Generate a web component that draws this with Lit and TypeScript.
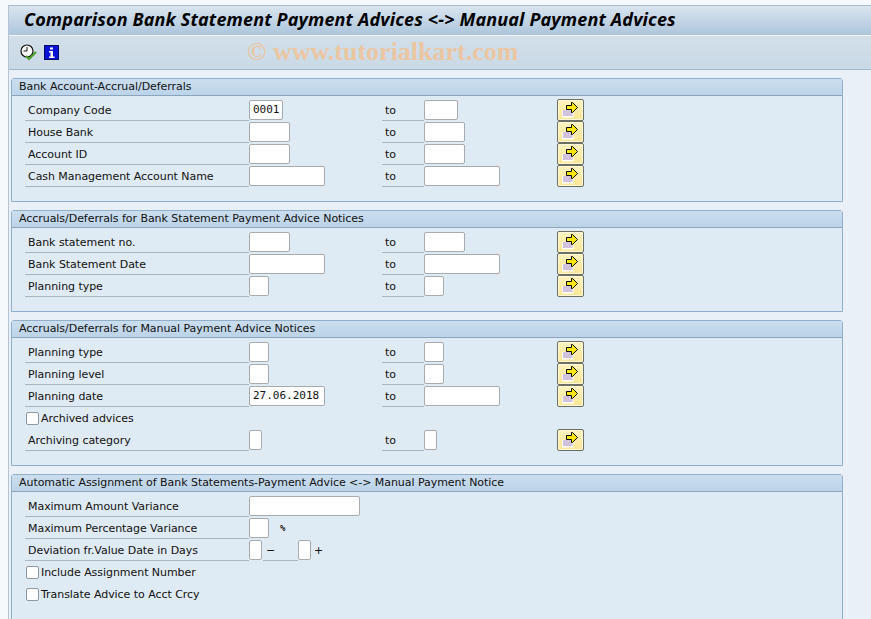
import { LitElement, html, css, nothing } from "lit";
import { customElement } from "lit/decorators.js";

type Field = { w: number; v?: string };
type Row = {
  label: string;
  check?: boolean;
  from?: Field;
  to?: Field;
  btn?: boolean;
  extra?: unknown;
};

const arrow = html`<svg class="arr" width="17" height="17" viewBox="0 0 17 17">
  <path d="M0 8h11.500v7.500H0z" fill="#fff" />
  <path d="M1 8h9.500v6H1z" fill="#d3c2de" />
  <path d="M4.500 3.500h5v-3h1l5 5-5 5h-1v-3h-5z" fill="#ffe600" stroke="#000" stroke-width="1" />
</svg>`;

const groups: { title: string; rows: Row[] }[] = [
  {
    title: "Bank Account-Accrual/Deferrals",
    rows: [
      { label: "Company Code", from: { w: 34, v: "0001" }, to: { w: 34 }, btn: true },
      { label: "House Bank", from: { w: 41 }, to: { w: 41 }, btn: true },
      { label: "Account ID", from: { w: 41 }, to: { w: 41 }, btn: true },
      { label: "Cash Management Account Name", from: { w: 76 }, to: { w: 76 }, btn: true },
    ],
  },
  {
    title: "Accruals/Deferrals for Bank Statement Payment Advice Notices",
    rows: [
      { label: "Bank statement no.", from: { w: 41 }, to: { w: 41 }, btn: true },
      { label: "Bank Statement Date", from: { w: 76 }, to: { w: 76 }, btn: true },
      { label: "Planning type", from: { w: 20 }, to: { w: 20 }, btn: true },
    ],
  },
  {
    title: "Accruals/Deferrals for Manual Payment Advice Notices",
    rows: [
      { label: "Planning type", from: { w: 20 }, to: { w: 20 }, btn: true },
      { label: "Planning level", from: { w: 20 }, to: { w: 20 }, btn: true },
      { label: "Planning date", from: { w: 76, v: "27.06.2018" }, to: { w: 76 }, btn: true },
      { label: "Archived advices", check: true },
      { label: "Archiving category", from: { w: 13 }, to: { w: 13 }, btn: true },
    ],
  },
  {
    title: "Automatic Assignment of Bank Statements-Payment Advice <-> Manual Payment Notice",
    rows: [
      { label: "Maximum Amount Variance", from: { w: 111 } },
      { label: "Maximum Percentage Variance", from: { w: 20 }, extra: "pct" },
      { label: "Deviation fr.Value Date in Days", from: { w: 13 }, extra: "dev" },
      { label: "Include Assignment Number", check: true },
      { label: "Translate Advice to Acct Crcy", check: true },
    ],
  },
];

@customElement("app-root")
export class AppRoot extends LitElement {
  static styles = css`
    :host {
      display: block;
      width: 871px;
      height: 619px;
      overflow: hidden;
      background: #f6f9fc;
      font-family: "DejaVu Sans", sans-serif;
      font-size: 11px;
      letter-spacing: -0.05px;
      color: #111;
    }
    .win {
      position: relative;
      margin: 5px 0 0 8px;
      height: 614px;
      overflow: hidden;
      background: #e9f0f8;
      border-top: 1px solid #a9bccd;
      border-left: 1px solid #b4c4d3;
    }
    .title {
      height: 30px;
      box-sizing: border-box;
      padding: 0 0 3px 15px;
      display: flex;
      align-items: center;
      background: linear-gradient(#d9e5ef, #adc5db);
      font: italic bold 18px "Noto Sans", "DejaVu Sans", sans-serif;
      letter-spacing: 0.15px;
      color: #000;
      border-bottom: 1px solid #f0f5f9;
    }
    .tools {
      height: 33px;
      display: flex;
      align-items: center;
      gap: 7px;
      padding-left: 11px;
      background: linear-gradient(#d2dfea, #c9d9e6);
      border-bottom: 1px solid #a7b6c4;
    }
    .tools svg {
      display: block;
    }
    .mark {
      position: absolute;
      left: 238px;
      top: 31px;
      font: bold 26px "Liberation Serif", serif;
      letter-spacing: 0;
      color: #ebc6a3;
      white-space: nowrap;
    }
    .body {
      padding: 8px 28px 0 2px;
      display: flex;
      flex-direction: column;
      gap: 8px;
    }
    .group {
      border: 1px solid #91aecb;
      border-top-left-radius: 3px;
      border-top-right-radius: 3px;
      background: #deeaf4;
      padding-bottom: 13px;
    }
    .ghead {
      height: 16px;
      line-height: 15px;
      padding-left: 7px;
      background: linear-gradient(#cbdeef, #bcd3e8);
      border-bottom: 1px solid #8ba5bf;
      white-space: nowrap;
    }
    .rows {
      padding: 4px 0 0 13px;
    }
    .row {
      height: 22px;
      display: flex;
      align-items: flex-start;
    }
    .lbl {
      width: 224px;
      height: 21px;
      box-sizing: border-box;
      padding-left: 3px;
      line-height: 21px;
      white-space: nowrap;
      flex: none;
    }
    .u {
      border-bottom: 1px solid #a9b6c2;
    }
    .inp {
      flex: none;
      height: 20px;
      box-sizing: border-box;
      background: #fff;
      border: 1px solid #a8acb0;
      border-radius: 2px;
      font: 11px/18px "DejaVu Sans Mono", monospace;
      letter-spacing: 0;
      padding-left: 3px;
      color: #111;
      overflow: hidden;
    }
    .to {
      width: 42px;
      height: 21px;
      box-sizing: border-box;
      padding-left: 3px;
      line-height: 21px;
      flex: none;
    }
    .tof {
      flex: none;
    }
    .btn {
      flex: none;
      width: 27px;
      height: 22px;
      margin-top: -1px;
      box-sizing: border-box;
      background: linear-gradient(#fff3c0, #fde793);
      border: 1px solid #6f6f62;
      border-radius: 2px;
      box-shadow: inset 0 0 0 1px #fff8dc;
      display: flex;
      align-items: center;
      justify-content: center;
    }
    .chk {
      flex: none;
      width: 13px;
      height: 13px;
      box-sizing: border-box;
      margin: 4px 2px 0 1px;
      background: #fff;
      border: 1px solid #8d98a3;
      border-radius: 2px;
    }
    .ck {
      height: 21px;
      line-height: 21px;
      white-space: nowrap;
    }
    .pct {
      margin-left: 11px;
      font: bold 9px/21px "DejaVu Sans Mono", monospace;
    }
    .dash {
      width: 35px;
      height: 21px;
      box-sizing: border-box;
      padding-left: 3px;
      line-height: 21px;
      margin-left: 1px;
    }
    .plus {
      margin-left: 3px;
      line-height: 21px;
    }
  `;

  private field(f: Field) {
    return html`<div class="inp" style="width:${f.w}px">${f.v ?? ""}</div>`;
  }

  private row(r: Row) {
    if (r.check) {
      return html`<div class="row">
        <span class="chk"></span><span class="ck">${r.label}</span>
      </div>`;
    }
    return html`<div class="row">
      <div class="lbl u">${r.label}</div>
      ${r.from ? this.field(r.from) : nothing}
      ${r.extra === "pct" ? html`<span class="pct">%</span>` : nothing}
      ${r.extra === "dev"
        ? html`<div class="dash u">−</div>
            ${this.field({ w: 13 })}
            <span class="plus">+</span>`
        : nothing}
      ${r.to
        ? html`<div class="tof" style="width:${133 - r.from!.w}px"></div>
            <div class="to u">to</div>
            ${this.field(r.to)}
            <div class="tof" style="width:${133 - r.to.w}px"></div>`
        : nothing}
      ${r.btn ? html`<div class="btn">${arrow}</div>` : nothing}
    </div>`;
  }

  render() {
    return html`<div class="win">
      <div class="title">Comparison Bank Statement Payment Advices &lt;-&gt; Manual Payment Advices</div>
      <div class="tools">
        <svg width="17" height="17" viewBox="0 0 17 17">
          <circle cx="7" cy="7" r="6" fill="#fff" stroke="#111" stroke-width="1.200" />
          <path d="M7 3v4H3.500" fill="none" stroke="#111" />
          <path d="M6 12l3 3 7-7" fill="none" stroke="#4ea02c" stroke-width="2.200" />
        </svg>
        <svg width="15" height="15" viewBox="0 0 15 15">
          <rect x=".5" y=".5" width="14" height="14" fill="#0a12d8" stroke="#000a60" />
          <rect x="6" y="2.500" width="3" height="2" fill="#fff" />
          <path d="M5 6h4v5.500h1.500V13h-5.500v-1.500h1.500V7.500H5z" fill="#fff" />
        </svg>
      </div>
      <div class="mark">© www.tutorialkart.com</div>
      <div class="body">
        ${groups.map(
          (g) => html`<section class="group">
            <div class="ghead">${g.title}</div>
            <div class="rows">${g.rows.map((r) => this.row(r))}</div>
          </section>`
        )}
      </div>
    </div>`;
  }
}
